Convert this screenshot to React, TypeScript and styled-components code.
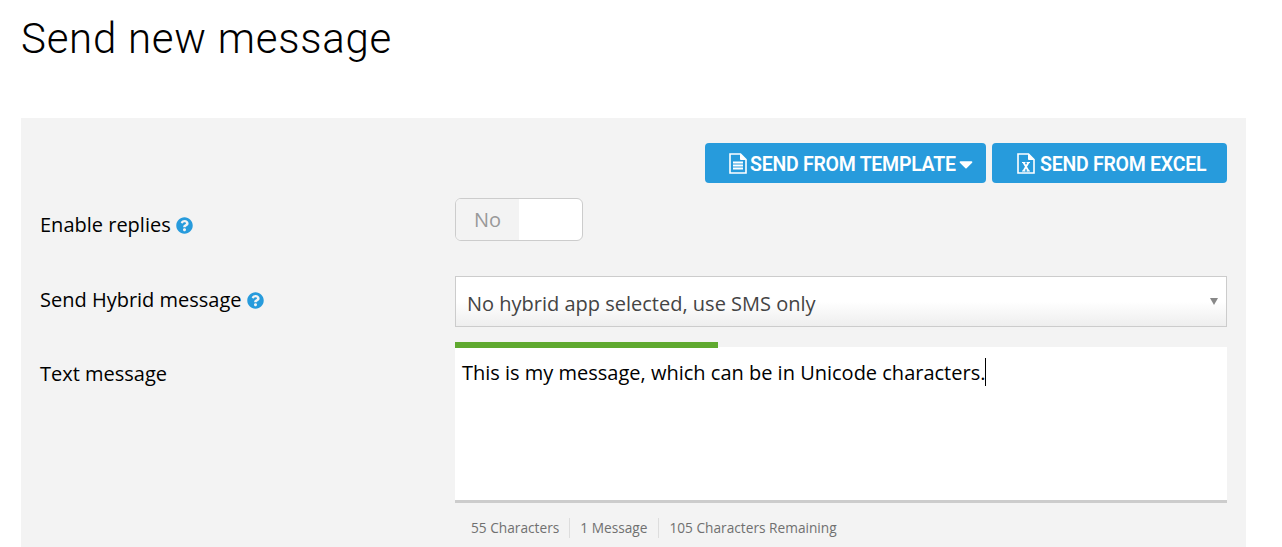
import React from "react";
import styled, { createGlobalStyle } from "styled-components";
import { FaQuestionCircle, FaCaretDown } from "react-icons/fa";

const GlobalStyle = createGlobalStyle`
  html, body {
    margin: 0;
    padding: 0;
    background: #fff;
    height: 547px;
    overflow: hidden;
  }
  body {
    font-family: "Open Sans", "Liberation Sans", sans-serif;
    color: #000;
  }
`;

const Page = styled.div`
  padding: 0 36px 0 21px;
`;

const Title = styled.h1`
  margin: 0;
  height: 118px;
  padding-top: 14px;
  box-sizing: border-box;
  font-family: "Roboto", "Liberation Sans", sans-serif;
  font-weight: 300;
  font-size: 42px;
  line-height: 50px;
  letter-spacing: 0.75px;
  color: #000;
`;

const Panel = styled.div`
  background: #f3f3f3;
  height: 429px;
  padding: 25px 19px 0;
  box-sizing: border-box;
`;

const Toolbar = styled.div`
  display: flex;
  justify-content: flex-end;
  gap: 6px;
`;

const ActionButton = styled.button<{ $width: number; $pad: number; $gap: number }>`
  display: flex;
  align-items: center;
  gap: ${(p) => p.$gap}px;
  width: ${(p) => p.$width}px;
  height: 40px;
  padding: 3px 0 0 ${(p) => p.$pad}px;
  border: 0;
  border-radius: 4px;
  background: #279bdc;
  color: #fff;
  font-family: "Roboto", "Liberation Sans", sans-serif;
  font-weight: 600;
  font-size: 19.5px;
  letter-spacing: -0.26px;
`;

const ButtonCaret = styled(FaCaretDown)`
  width: 22px;
  height: 22px;
  margin: -2px 0 0 -4px;
`;

const FileIcon = styled.svg`
  flex: none;
  width: 18px;
  height: 21px;
  margin-top: -3px;
`;

const Row = styled.div<{ $height: number }>`
  display: grid;
  grid-template-columns: 415px 772px;
  height: ${(p) => p.$height}px;
`;

const Label = styled.label<{ $top: number }>`
  display: flex;
  align-items: center;
  gap: 5px;
  height: 24px;
  margin-top: ${(p) => p.$top}px;
  font-size: 20px;
  line-height: 24px;
  color: #000;
`;

const HelpIcon = styled(FaQuestionCircle)`
  width: 17px;
  height: 17px;
  color: #279bdc;
`;

const Toggle = styled.div`
  display: flex;
  width: 128px;
  height: 43px;
  margin-top: 15px;
  border: 1px solid #ccc;
  border-radius: 6px;
  box-sizing: border-box;
  background: #fff;
  overflow: hidden;
`;

const ToggleOff = styled.span`
  display: flex;
  align-items: center;
  justify-content: center;
  width: 63px;
  background: #f3f3f3;
  color: #999;
  font-size: 20px;
`;

const Select = styled.div`
  display: flex;
  align-items: center;
  justify-content: space-between;
  height: 51px;
  padding: 3px 8px 0 11px;
  box-sizing: border-box;
  border: 1px solid #ccc;
  background: linear-gradient(#fff 0%, #fff 50%, #eee 100%);
  color: #444;
  font-size: 20px;
`;

const SelectArrow = styled.span`
  width: 0;
  height: 0;
  margin-bottom: 3px;
  border-style: solid;
  border-width: 7px 4px 0;
  border-color: #888 transparent transparent;
`;

const MessageField = styled.div`
  display: flex;
  flex-direction: column;
`;

const Progress = styled.div`
  position: relative;
  z-index: 1;
  height: 5px;
`;

const ProgressFill = styled.div`
  height: 6px;
  background: #5fa92f;
`;

const MessageText = styled.div`
  height: 156px;
  padding: 13px 7px 0;
  box-sizing: border-box;
  background: #fff;
  border-bottom: 3px solid #ccc;
  font-size: 20px;
  line-height: 26px;
  color: #000;
`;

const Caret = styled.span`
  display: inline-block;
  width: 1px;
  height: 28px;
  margin: -2px 0 0 0;
  vertical-align: top;
  background: #000;
`;

const Counters = styled.div`
  display: flex;
  align-items: center;
  padding: 15px 0 0 16px;
`;

const Counter = styled.span`
  padding: 0 11px 0 10px;
  height: 20px;
  line-height: 20px;
  font-size: 13.7px;
  color: #707070;
  border-left: 1px solid #ddd;

  &:first-child {
    padding: 0 10px 0 0;
    border-left: 0;
  }
`;

const TemplateIcon = () => (
  <FileIcon viewBox="0 0 18 21" fill="none" stroke="#fff">
    <path d="M1 1h10.5L17 6.5V20H1z" strokeWidth="1.6" />
    <path d="M11.5 1.5v5h5z" fill="#fff" strokeWidth="1" />
    <path d="M4 9.5h10M4 12.5h10M4 15.5h10" strokeWidth="1.8" />
  </FileIcon>
);

const ExcelIcon = () => (
  <FileIcon viewBox="0 0 18 21" fill="none" stroke="#fff">
    <path d="M1 1h10.5L17 6.5V20H1z" strokeWidth="1.6" />
    <path d="M11.5 1.5v5h5z" fill="#fff" strokeWidth="1" />
    <path d="M6.5 9.5l5 8.5M11.5 9.5l-5 8.5" strokeWidth="1.8" />
    <path d="M5 9.5h3.5M9.5 9.5H13M5 18h3.5M9.5 18H13" strokeWidth="1.1" />
  </FileIcon>
);

const messageText = "This is my message, which can be in Unicode characters.";

export default function App() {
  return (
    <Page>
      <GlobalStyle />
      <Title>Send new message</Title>
      <Panel>
        <Toolbar>
          <ActionButton $width={281} $pad={24} $gap={3}>
            <TemplateIcon />
            SEND FROM TEMPLATE
            <ButtonCaret />
          </ActionButton>
          <ActionButton $width={235} $pad={25} $gap={5}>
            <ExcelIcon />
            SEND FROM EXCEL
          </ActionButton>
        </Toolbar>
        <Row $height={93}>
          <Label $top={30}>
            Enable replies <HelpIcon />
          </Label>
          <Toggle>
            <ToggleOff>No</ToggleOff>
          </Toggle>
        </Row>
        <Row $height={66}>
          <Label $top={12}>
            Send Hybrid message <HelpIcon />
          </Label>
          <Select>
            No hybrid app selected, use SMS only
            <SelectArrow />
          </Select>
        </Row>
        <Row $height={205}>
          <Label $top={20}>Text message</Label>
          <MessageField>
            <Progress>
              <ProgressFill style={{ width: `${(55 / 161.4) * 100}%` }} />
            </Progress>
            <MessageText>
              {messageText}
              <Caret />
            </MessageText>
            <Counters>
              <Counter>55 Characters</Counter>
              <Counter>1 Message</Counter>
              <Counter>105 Characters Remaining</Counter>
            </Counters>
          </MessageField>
        </Row>
      </Panel>
    </Page>
  );
}
